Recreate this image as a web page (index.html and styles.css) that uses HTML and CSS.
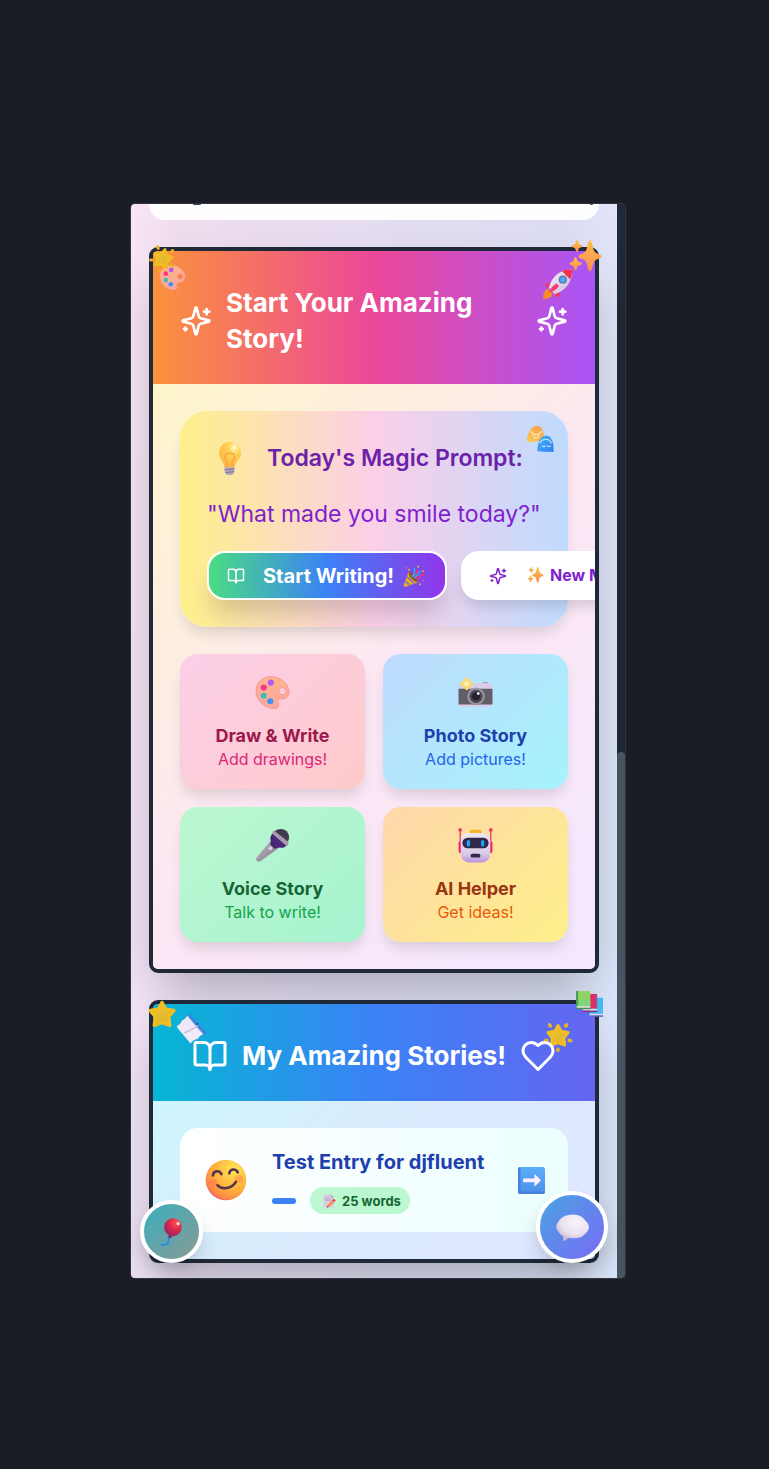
FILE: index.html
```html
<!DOCTYPE html>
<html lang="en">
<head>
<meta charset="utf-8">
<meta name="viewport" content="width=device-width, initial-scale=1">
<title>My Amazing Stories</title>
<link rel="stylesheet" href="styles.css">
</head>
<body>
<svg class="sprite" aria-hidden="true">
  <defs>
    <linearGradient id="gold" x1="0" y1="0" x2="1" y2="1"><stop offset="0" stop-color="#f3c92e"/><stop offset=".6" stop-color="#e2b832"/><stop offset="1" stop-color="#f0ae1c"/></linearGradient>
    <linearGradient id="spark" x1="0" y1="0" x2="0" y2="1"><stop offset="0" stop-color="#fbc23e"/><stop offset="1" stop-color="#fd8a5e"/></linearGradient>
    <linearGradient id="skin" x1="0" y1="0" x2="0" y2="1"><stop offset="0" stop-color="#fdb58a"/><stop offset="1" stop-color="#fda6a0"/></linearGradient>
    <linearGradient id="metal" x1="0" y1="0" x2="1" y2="1"><stop offset="0" stop-color="#f6f1fb"/><stop offset="1" stop-color="#c9b6d8"/></linearGradient>
    <radialGradient id="bulb" cx=".7" cy=".2" r=".85"><stop offset="0" stop-color="#fffbd8"/><stop offset=".3" stop-color="#ffd455"/><stop offset="1" stop-color="#fcb244"/></radialGradient>
    <radialGradient id="face" cx=".7" cy=".25" r=".85"><stop offset="0" stop-color="#ffe55c"/><stop offset=".6" stop-color="#ffae38"/><stop offset=".85" stop-color="#fb8a48"/><stop offset="1" stop-color="#ee5c68"/></radialGradient>
    <radialGradient id="red" cx=".7" cy=".25" r=".85"><stop offset="0" stop-color="#ff5058"/><stop offset=".5" stop-color="#d82848"/><stop offset="1" stop-color="#94216a"/></radialGradient>
    <radialGradient id="cloud" cx=".6" cy=".3" r=".7"><stop offset="0" stop-color="#f8f5fa"/><stop offset=".65" stop-color="#eae2f0"/><stop offset="1" stop-color="#cdb5d2"/></radialGradient>
    <linearGradient id="robot" x1="0" y1="0" x2="0" y2="1"><stop offset="0" stop-color="#eee7f3"/><stop offset=".7" stop-color="#d9cce6"/><stop offset="1" stop-color="#b793dc"/></linearGradient>
    <linearGradient id="tile" x1="0" y1="0" x2="0" y2="1"><stop offset="0" stop-color="#5cadfa"/><stop offset="1" stop-color="#4a90e8"/></linearGradient>
    <linearGradient id="blue" x1="0" y1="0" x2="1" y2="1"><stop offset="0" stop-color="#3fb4f4"/><stop offset="1" stop-color="#367df4"/></linearGradient>
    <linearGradient id="handle" x1="0" y1="0" x2="1" y2="1"><stop offset="0" stop-color="#c4bccb"/><stop offset="1" stop-color="#7c7283"/></linearGradient>
    <linearGradient id="mask" x1="0" y1="1" x2="1" y2="0"><stop offset="0" stop-color="#fac94c"/><stop offset="1" stop-color="#fb9c52"/></linearGradient>
  </defs>

  <symbol id="i-sparkles" viewBox="0 0 24 24"><g fill="none" stroke="currentColor" stroke-width="2" stroke-linecap="round" stroke-linejoin="round"><path d="M9.937 15.5A2 2 0 0 0 8.5 14.063l-6.135-1.582a.5.5 0 0 1 0-.962L8.5 9.936A2 2 0 0 0 9.937 8.5l1.582-6.135a.5.5 0 0 1 .963 0L14.063 8.5A2 2 0 0 0 15.5 9.937l6.135 1.581a.5.5 0 0 1 0 .964L15.5 14.063a2 2 0 0 0-1.437 1.437l-1.582 6.135a.5.5 0 0 1-.963 0z"/><path d="M20 3v4M22 5h-4M4 17v2M5 18H3"/></g></symbol>
  <symbol id="i-book" viewBox="0 0 24 24"><g fill="none" stroke="currentColor" stroke-width="2" stroke-linecap="round" stroke-linejoin="round"><path d="M12 7v14"/><path d="M3 18a1 1 0 0 1-1-1V4a1 1 0 0 1 1-1h5a4 4 0 0 1 4 4 4 4 0 0 1 4-4h5a1 1 0 0 1 1 1v13a1 1 0 0 1-1 1h-6a3 3 0 0 0-3 3 3 3 0 0 0-3-3z"/></g></symbol>
  <symbol id="i-heart" viewBox="0 0 24 24"><path fill="none" stroke="currentColor" stroke-width="2" stroke-linecap="round" stroke-linejoin="round" d="M19 14c1.49-1.46 3-3.21 3-5.5A5.5 5.5 0 0 0 16.500 3c-1.760 0-3 .5-4.500 2-1.500-1.500-2.740-2-4.500-2A5.500 5.500 0 0 0 2 8.500c0 2.300 1.500 4.050 3 5.500l7 7Z"/></symbol>

  <symbol id="e-star" viewBox="0 0 32 32"><path d="M16 3 L20 10.500 L29.500 12 L23.500 19 L24.800 29 L16 25.500 L7.200 29 L8.500 19 L2.500 12 L12 10.500Z" fill="url(#gold)" stroke="#f0bd22" stroke-width="4" stroke-linejoin="round"/></symbol>
  <symbol id="e-glow" viewBox="0 0 32 32"><path d="M16 4 L19.200 10 L26.500 11.200 L22 17 L23 24.500 L16 21.800 L9 24.500 L10 17 L5.500 11.200 L12.800 10Z" fill="url(#gold)" stroke="#f0bd22" stroke-width="3.500" stroke-linejoin="round"/><g stroke="#e8b222" stroke-width="3.800" stroke-linecap="round"><path d="M7 3l.8 1.300M25 3l-.8 1.300M2.500 20l1.500-.4M29.500 20l-1.500-.4M16 29v1"/></g></symbol>
  <symbol id="e-sparkles" viewBox="0 0 32 32"><g fill="url(#spark)"><path d="M20.500 0c2.200 0 2.600 9 4.500 11.500s7 2.500 7 5-5 2-7 4.500S22.700 31.500 20.500 31.500 18 23.500 16 21s-7-2-7-4.500 5-2.500 7-5S18.300 0 20.500 0z"/><path d="M7.500 0c1.200 0 1.200 3 2.100 4s3.400.9 3.400 2.200-2.500 1-3.400 2-1 3.800-2.100 3.800-1.200-2.800-2.100-3.800S2 7.500 2 6.200s2.500-1.200 3.400-2.200S6.300 0 7.500 0z"/><path d="M6 17c1.300 0 1.400 3.200 2.400 4.300s4.100 1 4.100 2.400-3.100 1.100-4.100 2.300S7.300 30.500 6 30.500s-1.400-3.300-2.400-4.500S0 25.100 0 23.700s2.600-1.300 3.600-2.400S4.700 17 6 17z"/></g></symbol>
  <symbol id="e-palette" viewBox="0 0 32 32"><path fill="url(#skin)" stroke="#f98f8f" stroke-width=".8" fill-rule="evenodd" d="M14.500 1.500C7 1.500 1 7 1 14.500 1 24 9 30.500 17.500 30.500c4.500 0 4.500-2.500 3.800-4.500-.8-2.500.2-4 3.200-4 4 0 6.500-2.800 6.500-6.500C31 7 22 1.500 14.500 1.500zM25 11.500a3.300 3.300 0 1 1 0 6.600 3.300 3.300 0 0 1 0-6.600z"/><circle cx="14.500" cy="7" r="2.800" fill="#b55af0"/><circle cx="8" cy="11.500" r="2.800" fill="#f33a8a"/><circle cx="8" cy="19" r="2.800" fill="#3dbdb4"/><circle cx="14" cy="24" r="2.800" fill="#3d90f4"/></symbol>
  <symbol id="e-rocket" viewBox="0 0 32 32"><path d="M5 21c-4 3-5 7-5 11 4 0 8-1 10-5z" fill="#f98a24"/><path d="M12 15c-4-1-8 0-10 3l7 4zM17 21c1 4 1 7-2 10l-5-6z" fill="#f03462"/><path d="M30 1.500C18 1 9 9 6 20l6 7C23 24 31 14 30 1.500z" fill="url(#metal)"/><path d="M30 1.500c-4 0-8 .5-10.500 1.500l8.500 8.500c1.700-3 2-6.500 2-10z" fill="#f92e4c"/><path d="M14 16c-4 2-7 6-7.500 9 4-.5 8-3 10-6.500z" fill="#f53d72"/><circle cx="20.500" cy="12" r="4.200" fill="#5b74a8"/><circle cx="20.500" cy="12" r="2.900" fill="#4fa8f5"/></symbol>
  <symbol id="e-bulb" viewBox="0 0 32 32"><path d="M16 1C9.500 1 6.500 6 6.500 11c0 6 4.500 7 5 13.500h9C21 18 26.500 17 26.500 11 26.500 6 22.500 1 16 1z" fill="url(#bulb)"/><path d="M14 24v-5.500c-4-3-2.500-7.500 2.200-7.500s6.200 4.500 2.200 7.500V24" fill="none" stroke="#f7a13c" stroke-width="1.200"/><path d="M11.500 24h9v4l-2 3h-5l-2-3z" fill="#b6a8c2"/><path d="M11.500 26.500l9-1M12 29l8-1" stroke="#85769a" stroke-width="1"/></symbol>
  <symbol id="e-masks" viewBox="0 0 32 32"><path d="M6 2.500C9 0 14 0 17 2.500l3 8-1 8.500c-5-1-13 1-19 0C0 11 3 6 6 2.500z" fill="url(#mask)"/><path d="M4.500 7c3 5 10 5 13 0M6 12.500h3M12 12.500h3M8 15.500q2.500-2 5 0" fill="none" stroke="#ffe3b8" stroke-width="1.500"/><path d="M17 14.500c3-3 9-3 11 0 3.500 5 4 11 3.500 17-5-1-13 0-19-1-.500-6 1-12 4.500-16z" fill="url(#blue)"/><path d="M15.500 21c2-6 11.500-6 13.500 0M18 24q2 2 4 0M24 24q2 2 4 0" fill="none" stroke="#b7e0ff" stroke-width="1.500"/></symbol>
  <symbol id="e-party" viewBox="0 0 32 32"><path d="M8 10 L1 29c0 2 1 3 3 2.500L22 25z" fill="#f5a51f"/><path d="M6 17l10 10M3.500 24l6 5" stroke="#5f7fd0" stroke-width="2.200"/><path d="M8 11c4-2 15 7 13 14-5 0-13-7-13-14z" fill="#8a5a35"/><path d="M13 17c4-2 5-6 3-13M17 19c3-5 5-4 8-10" fill="none" stroke="#28a8f0" stroke-width="2.800"/><path d="M18 21c3-4 5-1 7-4s4-2 6-4M18 14l4-7" fill="none" stroke="#f4307e" stroke-width="2.800"/><g fill="#f04c90"><circle cx="5" cy="4" r="1.500"/><circle cx="29" cy="23" r="1.500"/></g><g fill="#f6b927"><circle cx="22" cy="2.500" r="1.400"/><circle cx="29" cy="9" r="1.300"/><circle cx="25" cy="28" r="1.400"/><circle cx="9" cy="7" r="1.400"/></g></symbol>
  <symbol id="e-camera" viewBox="0 0 32 32"><path d="M22 8q0-1.500 1.500-1.500h3Q28 6.500 28 8z" fill="#a3a3ae"/><rect x=".5" y="7.500" width="31" height="21.500" rx="2" fill="#d9cce8"/><path d="M.5 12.500h31V27H.5z" fill="#625e68"/><circle cx="16.500" cy="19.500" r="8" fill="#99959f"/><circle cx="16.500" cy="19.500" r="6" fill="#4c4653"/><circle cx="16.500" cy="19.500" r="3.800" fill="#28222f"/><circle cx="18.500" cy="17" r="1.200" fill="#fff"/><path d="M8 2.500l5.500 5.500L8 13.500 2.500 8z" fill="#f8da74" stroke="#f8da74" stroke-linejoin="round"/><path d="M8 5l3 3-3 3-3-3z" fill="#fff0b2"/></symbol>
  <symbol id="e-mic" viewBox="0 0 32 32"><path d="M15 11l7 7L5 30.500c-2 1.200-5-1-3.800-3.300z" fill="url(#handle)"/><path d="M15 8l9 9-6 2-4-4z" fill="#47206e"/><circle cx="23.500" cy="8.500" r="7.700" fill="#43394f"/><path d="M14 9c0 5 5 10 12 9l3-2L16 5c-1 1-2 3-2 4z" fill="#4b2677"/><path d="M17 2L31 13l-1.500 4L15.500 5z" fill="#a69baf"/><circle cx="14" cy="18.500" r="1.700" fill="#dcd3e2"/></symbol>
  <symbol id="e-robot" viewBox="0 0 32 32"><path d="M2 2v19M30 2v19" stroke="#e83468" stroke-width="1.200"/><circle cx="2" cy="1.800" r="1.700" fill="#f03b63"/><circle cx="30" cy="1.800" r="1.700" fill="#f03b63"/><rect x=".5" y="12" width="4" height="11" rx="2" fill="#ef2868"/><rect x="27.500" y="12" width="4" height="11" rx="2" fill="#ef2868"/><rect x="10.500" y="1.500" width="11" height="5" rx="2" fill="#f6b42a"/><rect x="2.500" y="4.500" width="27" height="27" rx="7.500" fill="url(#robot)"/><rect x="4" y="9" width="24" height="9.500" rx="4.700" fill="#33274c"/><rect x="8" y="11" width="3" height="6" rx="1.500" fill="#21a6f4"/><rect x="21" y="11" width="3" height="6" rx="1.500" fill="#21a6f4"/><rect x="11.500" y="23.500" width="9" height="3.500" rx="1.700" fill="#33274c"/></symbol>
  <symbol id="e-openbook" viewBox="0 0 32 32"><path d="M14 .5L31.500 20.500 29 23 12 3z" fill="#3b82df"/><path d="M12 2.500L28 21 21 26.500 7.500 8.500z" fill="#8ab4ea"/><path d="M11.500 3L24 18l-9 8L1 13.500q4-2 5-5.500 3-1 5.500-5z" fill="#eee7f6"/><path d="M21.500 15.500L28 22q-4 1.500-5.500 4.500Q17 28 15 31.500L1.500 15.500 1 13q5 1 8 6z" fill="#f1eaf8"/><path d="M8 20.500Q15 19 23 12" fill="none" stroke="#cbbfdd" stroke-width="1.400"/><circle cx="22" cy="11.500" r="1.200" fill="#2c4d9c"/></symbol>
  <symbol id="e-books" viewBox="0 0 32 32"><path d="M16 8h16v22H16z" fill="#45b9f5"/><path d="M16 27h16v2H16z" fill="#d9dcf4"/><path d="M16 29h16v1.500H16z" fill="#7553a8"/><path d="M8 3.500h17V21H8z" fill="#e02c68"/><path d="M23 3.500h2V21h-2z" fill="#ad4b74"/><path d="M8 21h17v2H8z" fill="#ecd0e4"/><path d="M8 23.500h17V25H8z" fill="#9c2360"/><path d="M0 0h17v19H0z" fill="#92d461"/><path d="M0 10h17v9H0z" fill="#76d488" opacity=".6"/><path d="M0 0h2.500v20H0z" fill="#45a258"/><path d="M1 18h16v2H1z" fill="#d8e8d4"/><path d="M1 20h17v1.500H1z" fill="#3f8f57"/></symbol>
  <symbol id="e-smile" viewBox="0 0 32 32"><circle cx="16" cy="16" r="15.500" fill="url(#face)"/><ellipse cx="6" cy="18" rx="3.500" ry="3" fill="#ff7350" opacity=".5"/><ellipse cx="26" cy="15" rx="3.500" ry="3" fill="#ff7350" opacity=".4"/><path d="M6 12.500c.5-3.700 5-4.300 6.500-1M18.500 11c.5-3.700 5-4 6.500-.8M9.500 20c3 3.500 11 3 14-2.500" fill="none" stroke="#553348" stroke-width="2" stroke-linecap="round"/></symbol>
  <symbol id="e-arrow" viewBox="0 0 32 32"><rect width="32" height="32" rx="3" fill="url(#tile)"/><path d="M0 3a3 3 0 0 1 3-3v29h29a3 3 0 0 1-3 3H3a3 3 0 0 1-3-3z" fill="#4582df"/><path d="M7 13.500h12.500V9.500q0-1 1-.5l6 6q.8.800 0 1.600l-6 6q-1 .5-1-.5V18H7q-1 0-1-1v-2.500q0-1 1-1z" fill="#fcf0fc"/></symbol>
  <symbol id="e-memo" viewBox="0 0 32 32"><path d="M3 1h17l7 7v23H3z" fill="#d9cce2"/><path d="M20 1v7h7z" fill="#b2a2c2"/><path d="M7 9h10M7 14h15" stroke="#a898ba" stroke-width="2"/><path d="M27 11l4 4-14 14-6 2 2-6z" fill="#fb8a3c"/><path d="M27 11l4 4-3 3-4-4z" fill="#ee3565"/><path d="M11 31l1.500-4 3 2.500z" fill="#4d3b5e"/></symbol>
  <symbol id="e-balloon" viewBox="0 0 32 32"><path d="M14 22c-4 2 0 7-5 8.500H4" fill="none" stroke="#308be8" stroke-width="2.200" stroke-linecap="round"/><path d="M14 18l-3 4 5 .5z" fill="#8d1b52"/><ellipse cx="17" cy="10.500" rx="10" ry="10.300" fill="url(#red)"/><circle cx="23" cy="6.500" r="1.800" fill="#ffdbe0"/></symbol>
  <symbol id="e-speech" viewBox="0 0 32 32"><path d="M16 3.500c7 0 11 3 13 6.500 4 3.500 4 8.500-.5 11.500C26 25.500 22 26.500 17 26.500c-2 0-3 0-5-.5-1.500 2-3.500 3-5.500 3 .8-1.500.5-3 0-5C4 23 3 21 2.500 20-.5 17.500-.5 13.500 2 11 4 7 9 3.500 16 3.500z" fill="url(#cloud)"/></symbol>
</svg>

<div class="device">
  <main class="page">
    <div class="search-panel"><span class="tail"></span><span class="tail tail-small"></span></div>

    <section class="card">
      <header class="card-head head-sunset">
        <svg class="icon"><use href="#i-sparkles"/></svg>
        <h2 class="grow">Start Your Amazing Story!</h2>
        <svg class="icon"><use href="#i-sparkles"/></svg>
      </header>
      <svg class="deco palette"><use href="#e-palette"/></svg>
      <svg class="deco glow-left"><use href="#e-glow"/></svg>
      <svg class="deco rocket"><use href="#e-rocket"/></svg>
      <svg class="deco sparkles" preserveAspectRatio="none"><use href="#e-sparkles"/></svg>
      <div class="card-body body-peach">
        <div class="prompt">
          <svg class="deco masks"><use href="#e-masks"/></svg>
          <div class="prompt-title">
            <svg class="emoji-bulb"><use href="#e-bulb"/></svg>
            <h3>Today's Magic Prompt:</h3>
          </div>
          <p class="question">"What made you smile today?"</p>
          <div class="actions">
            <button class="btn btn-start" type="button"><svg class="icon-small"><use href="#i-book"/></svg><span class="btn-label">Start Writing! <svg class="emoji-party"><use href="#e-party"/></svg></span></button>
            <button class="btn btn-new" type="button"><svg class="icon-small"><use href="#i-sparkles"/></svg><span class="btn-label"><svg class="emoji-tiny"><use href="#e-sparkles"/></svg> New Magic!</span></button>
          </div>
        </div>
        <div class="tiles">
          <button class="tile tile-pink" type="button"><svg class="emoji"><use href="#e-palette"/></svg><strong>Draw &amp; Write</strong><span>Add drawings!</span></button>
          <button class="tile tile-blue" type="button"><svg class="emoji"><use href="#e-camera"/></svg><strong>Photo Story</strong><span>Add pictures!</span></button>
          <button class="tile tile-green" type="button"><svg class="emoji"><use href="#e-mic"/></svg><strong>Voice Story</strong><span>Talk to write!</span></button>
          <button class="tile tile-orange" type="button"><svg class="emoji"><use href="#e-robot"/></svg><strong>AI Helper</strong><span>Get ideas!</span></button>
        </div>
      </div>
    </section>

    <section class="card">
      <header class="card-head head-ocean">
        <svg class="icon"><use href="#i-book"/></svg>
        <h2>My Amazing Stories!</h2>
        <svg class="icon icon-front"><use href="#i-heart"/></svg>
      </header>
      <svg class="deco star"><use href="#e-star"/></svg>
      <svg class="deco open-book"><use href="#e-openbook"/></svg>
      <svg class="deco books"><use href="#e-books"/></svg>
      <svg class="deco glow-right"><use href="#e-glow"/></svg>
      <div class="card-body body-sky">
        <article class="entry">
          <svg class="emoji-face"><use href="#e-smile"/></svg>
          <div class="entry-main">
            <h3>Test Entry for djfluent</h3>
            <div class="entry-meta"><span class="dash"></span><span class="badge"><svg class="emoji-memo"><use href="#e-memo"/></svg>25 words</span></div>
          </div>
          <svg class="emoji-arrow"><use href="#e-arrow"/></svg>
        </article>
      </div>
    </section>
  </main>
  <div class="scrollbar"><div class="thumb"></div></div>
  <button class="fab fab-balloon" type="button" aria-label="Celebrate"><svg class="emoji-balloon"><use href="#e-balloon"/></svg></button>
  <button class="fab fab-chat" type="button" aria-label="Chat"><svg class="emoji-chat"><use href="#e-speech"/></svg></button>
</div>
</body>
</html>
```
FILE: styles.css
```css
* { box-sizing: border-box; }
body {
  margin: 0;
  padding: 204px 144px 191px 131px;
  background: #1a1d25;
  font-family: Inter, "Liberation Sans", sans-serif;
}
h2, h3, p { margin: 0; }
svg { display: block; flex: none; }
button { font-family: inherit; border: 0; }
.sprite { position: absolute; width: 0; height: 0; }

.device {
  position: relative;
  display: flex;
  overflow: hidden;
  border-radius: 4px;
  box-shadow: 0 0 0 1px #32353f;
}
.page {
  flex: 1;
  min-width: 0;
  display: flex;
  flex-direction: column;
  gap: 27px;
  padding: 0 18px 15px;
  background: linear-gradient(100deg, #f9e5f4, #e8e4fa 50%, #dae6fa);
}
.scrollbar { width: 8px; display: flex; align-items: flex-end; background: #1f2937; }
.thumb { width: 100%; height: 49%; background: #4b5563; border-radius: 4px 4px 0 0; }

.search-panel {
  display: flex;
  justify-content: space-between;
  height: 16px;
  padding: 0 6px 0 44px;
  background: #fefdff;
  border-radius: 0 0 18px 18px;
  box-shadow: 0 18px 36px rgba(0, 0, 0, .1);
}
.tail { width: 8px; height: 1px; background: #374151; border-radius: 0 0 4px 4px; }
.tail-small { width: 3px; }

.card {
  position: relative;
  border: 4px solid #1f2937;
  border-radius: 9px;
  box-shadow: 0 25px 50px -12px rgba(0, 0, 0, .3);
}
.card-head {
  display: flex;
  align-items: center;
  justify-content: center;
  gap: 14px;
  padding: 34px 27px 27px;
  color: #fff;
  border-radius: 5px 5px 0 0;
}
.card-head h2 { font-size: 26px; line-height: 36px; font-weight: 700; }
.card-head .grow { flex: 1; }
.icon { width: 36px; height: 36px; }
.icon-front { position: relative; z-index: 1; }
.head-sunset .icon { width: 32px; height: 32px; }
.head-sunset { background: linear-gradient(90deg, #fb923c, #ec4899, #a855f7); }
.head-ocean { background: linear-gradient(90deg, #06b6d4, #3b82f6, #6366f1); }
.card-body { padding: 27px; overflow: hidden; border-radius: 0 0 5px 5px; }
.body-peach { background: linear-gradient(135deg, #fef6cb, #fce7f3 50%, #f3e8ff); }
.body-sky { background: linear-gradient(135deg, #cff6fe, #dbeafe 50%, #e0e7ff); }

.deco { position: absolute; width: 27px; height: 27px; }
.glow-left { left: -4px; top: -5px; transform: rotate(14deg); }
.palette { left: 6px; top: 13px; }
.sparkles { right: -7px; top: -11px; width: 33px; height: 32px; }
.rocket { right: 21px; top: 17px; width: 31px; height: 31px; }
.masks { right: 14px; top: 14px; width: 27px; height: 28px; }
.star { left: -5px; top: -4px; width: 28px; height: 28px; }
.open-book { left: 23px; top: 9px; width: 31px; height: 31px; }
.books { right: -8px; top: -13px; width: 27px; height: 27px; }
.glow-right { right: 22px; top: 18px; width: 30px; height: 30px; }

.prompt {
  position: relative;
  padding: 27px;
  border-radius: 27px;
  background: linear-gradient(90deg, #fef08a, #fbcfe8 50%, #bfdbfe);
  box-shadow: 0 9px 14px -3px rgba(0, 0, 0, .12);
}
.prompt-title { display: flex; align-items: center; height: 40px; padding-left: 5px; gap: 20px; }
.emoji-bulb { width: 35px; height: 35px; }
.prompt-title h3 { font-size: 23px; line-height: 32px; font-weight: 600; color: #6b21a8; white-space: nowrap; }
.question { margin-top: 18px; font-size: 23px; line-height: 36px; font-weight: 400; color: #7e22ce; white-space: nowrap; }
.actions { display: flex; gap: 14px; margin-top: 19px; }
.btn {
  display: flex;
  flex: none;
  align-items: center;
  height: 49px;
  gap: 18px;
  white-space: nowrap;
  border-radius: 18px;
  font-weight: 700;
}
.btn-label { display: flex; align-items: center; gap: 9px; }
.icon-small { width: 18px; height: 18px; }
.btn-start {
  padding: 0 20px 0 18px;
  border: 2px solid #fff;
  color: #fff;
  font-size: 20px;
  background: linear-gradient(90deg, #4ade80, #3b82f6 50%, #9333ea);
  background-origin: border-box;
  box-shadow: 0 18px 23px -5px rgba(0, 0, 0, .16);
}
.emoji-party { width: 22px; height: 22px; }
.btn-new { padding: 0 28px; gap: 20px; color: #7e22ce; background: #fff; font-size: 16px; box-shadow: 0 9px 14px -3px rgba(0, 0, 0, .14); }
.btn-new .btn-label { gap: 6px; padding-bottom: 2px; }
.emoji-tiny { width: 17px; height: 16px; }

.tiles { display: grid; grid-template-columns: 1fr 1fr; gap: 18px; margin-top: 27px; }
.tile {
  display: flex;
  flex-direction: column;
  align-items: center;
  height: 135px;
  padding: 21px 18px 17px;
  border-radius: 18px;
  box-shadow: 0 9px 14px -3px rgba(0, 0, 0, .13);
}
.tile strong { margin-top: 12px; font-size: 18px; line-height: 27px; font-weight: 700; }
.tile span { font-size: 16px; line-height: 21px; }
.emoji { width: 35px; height: 35px; }
.tile-pink { background: linear-gradient(135deg, #fbcfe8, #fecaca); color: #9d174d; }
.tile-pink span { color: #db2777; }
.tile-blue { background: linear-gradient(135deg, #bfdbfe, #a5f3fc); color: #1e40af; }
.tile-blue span { color: #2563eb; }
.tile-green { background: linear-gradient(135deg, #bbf7d0, #a7f3d0); color: #166534; }
.tile-green span { color: #16a34a; }
.tile-orange { background: linear-gradient(135deg, #fed7aa, #fef08a); color: #9a3412; }
.tile-orange span { color: #ea580c; }

.entry {
  display: flex;
  align-items: center;
  height: 104px;
  padding: 0 23px 0 25px;
  border-radius: 18px;
  background: linear-gradient(90deg, #fff, #ecfeff);
}
.emoji-face { width: 42px; height: 42px; }
.entry-main { flex: 1; margin-left: 25px; }
.entry h3 { font-size: 20px; line-height: 32px; font-weight: 700; color: #1e40af; white-space: nowrap; }
.entry-meta { display: flex; align-items: center; gap: 14px; margin-top: 9px; }
.dash { width: 24px; height: 6px; border-radius: 3px; background: #3b82f6; }
.badge { display: flex; align-items: center; gap: 6px; height: 27px; padding: 0 9px 0 12px; border-radius: 14px; background: #bbf7d0; color: #166534; font-size: 13px; font-weight: 700; white-space: nowrap; }
.emoji-memo { width: 14px; height: 14px; }
.emoji-arrow { width: 27px; height: 27px; }

.fab {
  position: absolute;
  display: flex;
  align-items: center;
  justify-content: center;
  padding: 0;
  border: 4px solid #fff;
  border-radius: 50%;
  bottom: 15px;
  background-origin: border-box;
  box-shadow: 0 12px 24px -6px rgba(0, 0, 0, .25);
}
.fab-balloon { left: 9px; width: 63px; height: 63px; background: linear-gradient(135deg, #35b0c2, #8f9890) border-box; }
.fab-chat { right: 17px; width: 72px; height: 72px; background: linear-gradient(135deg, #47a6e2, #7c68f6) border-box; }
.emoji-balloon { width: 28px; height: 28px; }
.emoji-chat { width: 33px; height: 33px; }
```
